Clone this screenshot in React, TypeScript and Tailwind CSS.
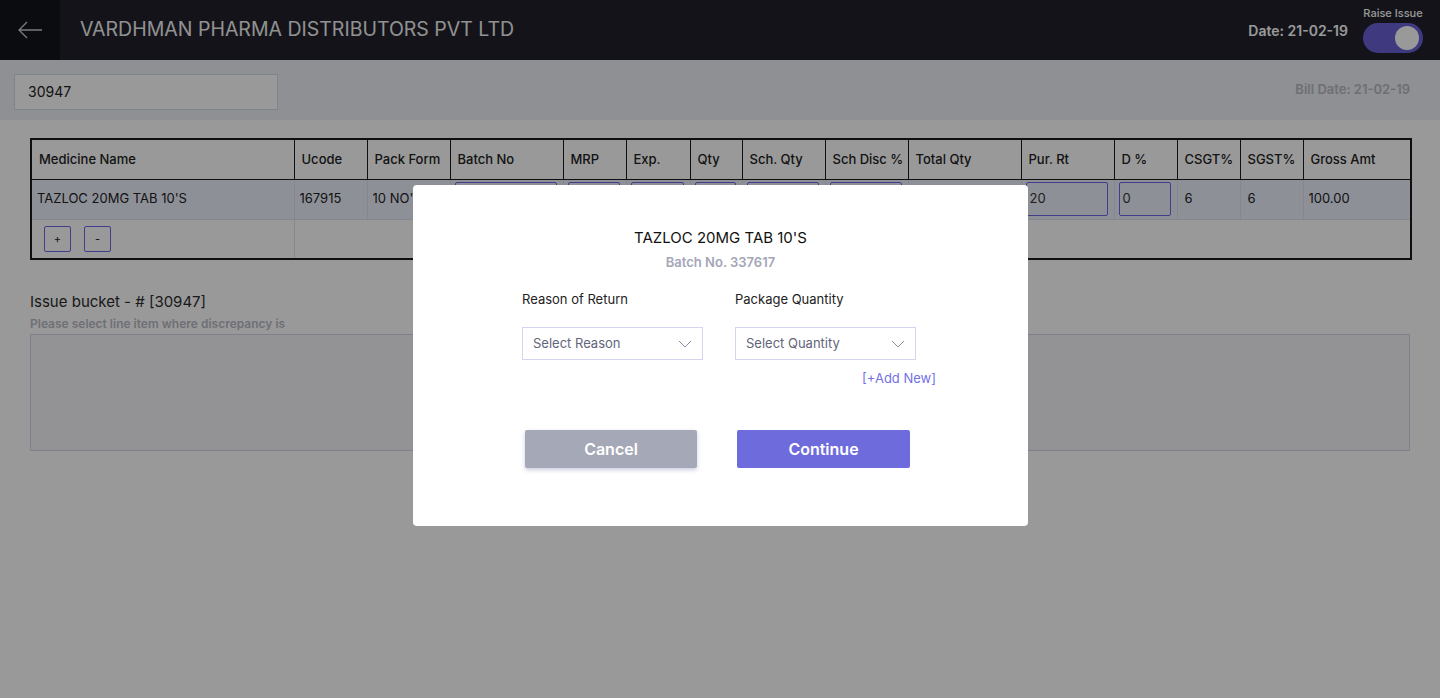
import React from "react";

const cols = [
  { label: "Medicine Name", w: 263 },
  { label: "Ucode", w: 73 },
  { label: "Pack Form", w: 83 },
  { label: "Batch No", w: 113 },
  { label: "MRP", w: 63 },
  { label: "Exp.", w: 64 },
  { label: "Qty", w: 52 },
  { label: "Sch. Qty", w: 83 },
  { label: "Sch Disc %", w: 83 },
  { label: "Total Qty", w: 113 },
  { label: "Pur. Rt", w: 93 },
  { label: "D %", w: 63 },
  { label: "CSGT%", w: 63 },
  { label: "SGST%", w: 63 },
  { label: "Gross Amt", w: 108 },
];

const Chevron: React.FC = () => (
  <svg width="14" height="8" viewBox="0 0 14 8" fill="none">
    <path d="M1 1l6 6 6-6" stroke="#8a8da0" strokeWidth="1" />
  </svg>
);

const Field: React.FC<{ value?: string }> = ({ value }) => (
  <div className="h-[34px] ml-[4px] mr-[6px] border border-[#6c68e8] rounded-[2px] flex items-center px-[3px] text-[13px] text-[#333]">
    {value}
  </div>
);

const App: React.FC = () => (
  <div className="relative min-h-[698px] bg-white font-['Inter','Liberation_Sans',sans-serif] text-[#222]">
    <header className="h-[60px] bg-[#20212a] flex items-center">
      <div className="w-[60px] h-full bg-[#121419] flex items-center justify-center">
        <svg width="26" height="18" viewBox="0 0 26 18" fill="none">
          <path d="M25 9H2M10 1L2 9l8 8" stroke="#cfcfd4" strokeWidth="1.3" />
        </svg>
      </div>
      <h1 className="ml-[20px] text-[19.5px] text-[#f2f2f2]">VARDHMAN PHARMA DISTRIBUTORS PVT LTD</h1>
      <div className="ml-auto flex items-center mr-[17px]">
        <span className="text-[14px] font-semibold text-white mr-[15px] mt-[1px]">Date: 21-02-19</span>
        <div className="flex flex-col items-center">
          <span className="text-[11px] font-medium text-white leading-[12px] mb-[4px]">Raise Issue</span>
          <div className="w-[60px] h-[30px] rounded-full bg-[#6a62d6] flex items-center justify-end pr-[4px]">
            <div className="w-[24px] h-[24px] rounded-full bg-white" />
          </div>
        </div>
      </div>
    </header>

    <div className="h-[60px] bg-[#eef0f6] flex items-center px-[14px]">
      <div className="mt-[3px] w-[264px] h-[36px] bg-white border border-[#d5dae9] flex items-center px-[13px] text-[14px] text-[#222]">30947</div>
      <span className="ml-auto mr-[16px] text-[13px] font-semibold text-[#b8b9c1]">Bill Date: 21-02-19</span>
    </div>

    <div className="px-[30px] pt-[18px]">
      <table className="border-collapse border-2 border-[#1a1a1a] w-[1381px] table-fixed">
        <colgroup>
          {cols.map((c) => (
            <col key={c.label} style={{ width: c.w }} />
          ))}
        </colgroup>
        <thead>
          <tr className="h-[40px]">
            {cols.map((c) => (
              <th key={c.label} className="border border-[#1a1a1a] text-left font-medium text-[13px] px-[7px] whitespace-nowrap">
                {c.label}
              </th>
            ))}
          </tr>
        </thead>
        <tbody>
          <tr className="h-[40px] bg-[#edf0fc] text-[13px]">
            <td className="border border-[#dedff0] px-[5px]">TAZLOC 20MG TAB 10'S</td>
            <td className="border border-[#dedff0] px-[5px]">167915</td>
            <td className="border border-[#dedff0] px-[5px] whitespace-nowrap overflow-hidden">10 NO'S</td>
            <td className="border border-[#dedff0]"><Field /></td>
            <td className="border border-[#dedff0]"><Field /></td>
            <td className="border border-[#dedff0]"><Field /></td>
            <td className="border border-[#dedff0]"><Field /></td>
            <td className="border border-[#dedff0]"><Field /></td>
            <td className="border border-[#dedff0]"><Field /></td>
            <td className="border border-[#dedff0] px-[5px]"></td>
            <td className="border border-[#dedff0]"><Field value="20" /></td>
            <td className="border border-[#dedff0]"><Field value="0" /></td>
            <td className="border border-[#dedff0] px-[7px]">6</td>
            <td className="border border-[#dedff0] px-[7px]">6</td>
            <td className="border border-[#dedff0] px-[5px]">100.00</td>
          </tr>
          <tr className="h-[40px]">
            <td className="border border-[#dedff0] px-[12px]">
              <div className="flex gap-[13px]">
                <button className="w-[27px] h-[26px] border border-[#6c68e8] rounded-[2px] text-[11px]">+</button>
                <button className="w-[27px] h-[26px] border border-[#6c68e8] rounded-[2px] text-[11px]">-</button>
              </div>
            </td>
            <td colSpan={14} className="border-l border-[#dedff0]"></td>
          </tr>
        </tbody>
      </table>

      <div className="mt-[33px] text-[15px] text-[#2c2c2c] leading-[18px]">Issue bucket - # [30947]</div>
      <div className="mt-[6px] text-[12px] font-semibold text-[#b9bbc6] leading-[14px]">Please select line item where discrepancy is</div>
      <div className="mt-[3px] h-[117px] w-[1380px] border border-[#d4d6ea] bg-[#f5f5fb]" />
    </div>

    <div className="fixed inset-0 bg-black/40 flex justify-center items-start pt-[185px]">
      <div className="w-[615px] h-[341px] bg-white rounded-[4px] ml-[1px] flex flex-col items-center">
        <div className="mt-[44px] text-[15px] text-[#111] leading-[18px]">TAZLOC 20MG TAB 10'S</div>
        <div className="mt-[7px] text-[13px] font-semibold text-[#a4a6b8] leading-[16px]">Batch No. 337617</div>
        <div className="mt-[21px] flex gap-[32px] ml-[-3px]">
          <div className="flex flex-col">
            <span className="text-[13px] text-[#222] leading-[16px]">Reason of Return</span>
            <div className="mt-[20px] w-[181px] h-[33px] border border-[#d3d6ee] flex items-center justify-between pl-[10px] pr-[10px] text-[13px] text-[#62657a]">
              Select Reason
              <Chevron />
            </div>
          </div>
          <div className="flex flex-col">
            <span className="text-[13px] text-[#222] leading-[16px]">Package Quantity</span>
            <div className="mt-[20px] w-[181px] h-[33px] border border-[#d3d6ee] flex items-center justify-between pl-[10px] pr-[10px] text-[13px] text-[#62657a]">
              Select Quantity
              <Chevron />
            </div>
            <span className="mt-[10px] self-end mr-[-20px] text-[13px] text-[#7470e6] leading-[16px]">[+Add New]</span>
          </div>
        </div>
        <div className="mt-[44px] flex gap-[40px] ml-[-6px]">
          <button className="w-[172px] h-[38px] bg-[#a5a8b6] rounded-[2px] text-white text-[16px] font-semibold shadow-[0_2px_4px_rgba(110,110,170,0.35)]">Cancel</button>
          <button className="w-[173px] h-[38px] bg-[#6e6bdc] rounded-[2px] text-white text-[16px] font-semibold">Continue</button>
        </div>
      </div>
    </div>
  </div>
);

export default App;
